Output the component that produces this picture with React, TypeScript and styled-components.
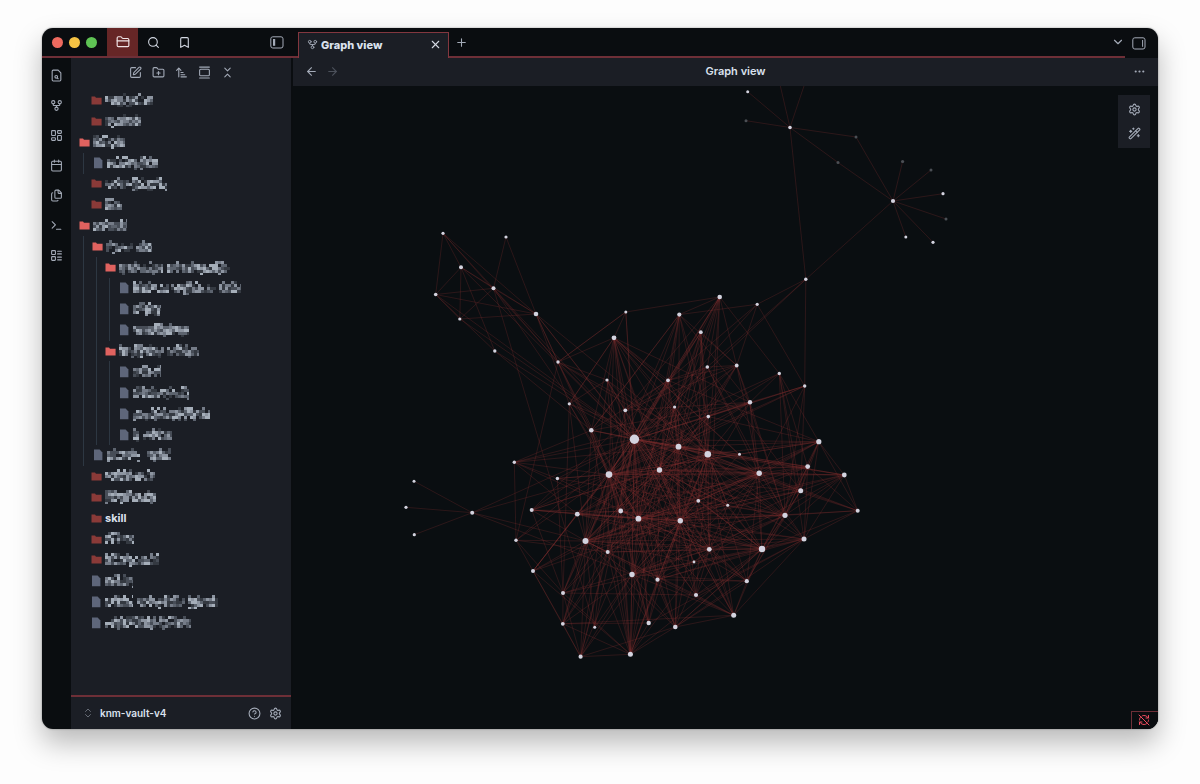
import React from "react";
import styled, { createGlobalStyle } from "styled-components";
import {
  ArrowLeft,
  ArrowRight,
  ArrowUpNarrowWide,
  Bookmark,
  Calendar,
  ChevronDown,
  ChevronsDownUp,
  ChevronsUpDown,
  CircleQuestionMark,
  Ellipsis,
  Files,
  FolderClosed,
  FolderPlus,
  GalleryVertical,
  GitFork,
  LayoutDashboard,
  LayoutList,
  Plus,
  RefreshCwOff,
  Search,
  Settings,
  SquarePen,
  Terminal,
  WandSparkles,
  X,
} from "lucide-react";

const color = {
  base: "#0a0d10",
  canvas: "#0a0e11",
  panel: "#1b1e25",
  accent: "#6e2f37",
  accentFill: "#662626",
  guide: "#2d3742",
  icon: "#a4abb8",
  iconBright: "#d3d8e2",
  iconFaint: "#4c515b",
  text: "#dbe2ee",
  folderOpen: "#e0625f",
  folder: "#8a3a38",
  file: "#5e667a",
};

const GlobalStyle = createGlobalStyle`
  *, *::before, *::after { box-sizing: border-box; }
  body {
    margin: 0;
    background: #fdfdfd;
    font-family: Inter, "Liberation Sans", sans-serif;
    color: ${color.text};
  }
`;

const Page = styled.div`
  display: flex;
  min-height: 100vh;
  padding: 28px 42px 55px;
`;

const Window = styled.div`
  flex: 1;
  min-width: 0;
  display: flex;
  flex-direction: column;
  overflow: hidden;
  border-radius: 11px;
  background: ${color.base};
  box-shadow: 0 0 2px rgba(0, 0, 0, 0.4), 0 14px 28px rgba(0, 0, 0, 0.27);
`;

const TitleBar = styled.header`
  display: flex;
  height: 30px;
`;

const TitleLeft = styled.div`
  display: flex;
  width: 256px;
  padding-right: 14px;
  border-bottom: 2px solid ${color.accent};
`;

const Lights = styled.div`
  display: flex;
  align-items: center;
  gap: 6px;
  padding: 0 10px;
`;

const Light = styled.span<{ $fill: string }>`
  width: 11px;
  height: 11px;
  border-radius: 50%;
  background: ${(p) => p.$fill};
`;

const IconButton = styled.button<{ $tone?: string }>`
  display: flex;
  align-items: center;
  justify-content: center;
  flex-shrink: 0;
  padding: 0;
  border: 0;
  background: none;
  color: ${(p) => p.$tone ?? color.icon};
`;

const PanelButton = styled(IconButton)<{ $active?: boolean }>`
  width: 31px;
  background: ${(p) => (p.$active ? color.accentFill : "none")};
`;

const Spacer = styled.div<{ $lined?: boolean }>`
  flex: 1;
  border-bottom: ${(p) => (p.$lined ? `2px solid ${color.accent}` : "0")};
`;

const Tab = styled.div`
  display: flex;
  align-items: center;
  width: 151px;
  margin-top: 4px;
  padding: 0 6px 2px 8px;
  gap: 3px;
  border: solid #83373f;
  border-width: 1px 1px 0;
  background: ${color.panel};
`;

const TabTitle = styled.span`
  flex: 1;
  font-size: 11px;
  font-weight: 800;
  line-height: 16px;
`;

const NewTab = styled(IconButton)`
  width: 25px;
  border-bottom: 2px solid ${color.accent};
`;

const TitleRight = styled.div`
  display: flex;
  align-items: center;
  width: 33px;
  padding-left: 7px;
`;

const ListTabs = styled(IconButton)`
  width: 14px;
  border-bottom: 2px solid ${color.accent};
`;

const Body = styled.div`
  flex: 1;
  display: flex;
  min-height: 0;
`;

const Ribbon = styled.nav`
  display: flex;
  flex-direction: column;
  align-items: center;
  gap: 17px;
  width: 29px;
  padding-top: 11px;
`;

const Sidebar = styled.aside`
  display: flex;
  flex-direction: column;
  width: 220px;
  background: ${color.panel};
`;

const Toolbar = styled.div`
  display: flex;
  justify-content: center;
  gap: 10px;
  padding: 8px 0 11px 1px;
`;

const Tree = styled.ul`
  display: grid;
  grid-auto-rows: 1fr;
  height: 543px;
  margin: 0 0 auto;
  padding: 0 8px;
  list-style: none;
`;

const TreeRow = styled.li`
  display: flex;
  min-height: 0;
`;

const Guide = styled.span`
  width: 9px;
  margin-left: 4px;
  border-left: 1px solid ${color.guide};
`;

const RowButton = styled.button<{ $indent: number }>`
  display: flex;
  align-items: center;
  gap: 3px;
  padding: 0 0 0 ${(p) => p.$indent}px;
  border: 0;
  background: none;
  color: ${color.text};
  font: 700 11px/16px Inter, "Liberation Sans", sans-serif;
`;

const Footer = styled.footer`
  display: flex;
  align-items: center;
  gap: 8px;
  height: 34px;
  padding: 0 9px 0 11px;
  border-top: 2px solid ${color.accent};
`;

const VaultButton = styled.button`
  display: flex;
  align-items: center;
  flex: 1;
  gap: 6px;
  padding: 0;
  border: 0;
  background: none;
  color: ${color.text};
  font: 600 10px/16px Inter, "Liberation Sans", sans-serif;
`;

const Main = styled.main`
  flex: 1;
  min-width: 0;
  display: flex;
  flex-direction: column;
  margin-left: 2px;
`;

const ViewHeader = styled.div`
  display: grid;
  grid-template-columns: 1fr auto 1fr;
  align-items: center;
  height: 28px;
  padding: 0 12px 2px;
  background: ${color.panel};
`;

const HeaderActions = styled.div<{ $end?: boolean }>`
  display: flex;
  gap: 8px;
  justify-content: ${(p) => (p.$end ? "flex-end" : "flex-start")};
`;

const ViewTitle = styled.h1`
  margin: 0;
  padding-left: 20px;
  font-size: 11px;
  font-weight: 600;
  line-height: 16px;
`;

const GraphArea = styled.section`
  position: relative;
  flex: 1;
  min-height: 0;
  display: flex;
  background: ${color.canvas};
`;

const GraphSvg = styled.svg`
  flex: 1;
  width: 0;
  min-width: 0;
  height: auto;
`;

const GraphControls = styled.div`
  position: absolute;
  top: 9px;
  right: 8px;
  display: flex;
  flex-direction: column;
  width: 32px;
  padding: 2px 0 3px;
  background: ${color.panel};
`;

const ControlButton = styled(IconButton)`
  height: 24px;
`;

const SyncStatus = styled.button`
  position: absolute;
  right: 0;
  bottom: 0;
  display: flex;
  align-items: center;
  padding: 2px 8px 3px 6px;
  border: solid ${color.accent};
  border-width: 1px 0 0 1px;
  background: ${color.base};
  color: #ee4d5f;
`;

/* ---------- icons ---------- */

const PanelIcon = ({ side }: { side: "left" | "right" }) => (
  <svg width="14" height="13" viewBox="0 0 14 13" fill="none" stroke="currentColor" aria-hidden="true">
    <rect x="0.8" y="0.8" width="12.2" height="11.2" rx="2" />
    {side === "left" ? (
      <rect x="3" y="3" width="2.2" height="6.8" fill="currentColor" stroke="none" />
    ) : (
      <path d="M10.6 3v6.8" />
    )}
  </svg>
);

const FileSearchIcon = () => (
  <svg width="13" height="13" viewBox="0 0 24 24" fill="none" stroke="currentColor" strokeWidth="2" strokeLinecap="round" strokeLinejoin="round" aria-hidden="true">
    <path d="M15 2H6a2 2 0 0 0-2 2v16a2 2 0 0 0 2 2h12a2 2 0 0 0 2-2V7z" />
    <circle cx="11.5" cy="14.5" r="2.5" />
    <path d="M13.3 16.3 15 18" />
  </svg>
);

const FolderGlyph = ({ fill }: { fill: string }) => (
  <svg width="11" height="9" viewBox="0 0 11 9" aria-hidden="true">
    <path d="M0.5 0.5H4L5 1.8H10.6V8.4H0.5Z" fill={fill} />
  </svg>
);

const FileGlyph = () => (
  <svg width="11" height="12" viewBox="0 0 11 12" aria-hidden="true">
    <path d="M1 0.6H6.6L9.4 3.4V11.2H1Z" fill={color.file} />
  </svg>
);

/* ---------- redacted names ---------- */

const mosaicShades = ["#343941", "#474d57", "#5c636e", "#757c88", "#8d95a1", "#a5aeb9"];
const rowDensity = [0.3, 0.88, 0.95, 0.82, 0.12];

const random = (seed: number) => {
  let s = seed * 7919 + 17;
  return () => {
    s = (s * 1103515245 + 12345) % 2147483648;
    return s / 2147483648;
  };
};

const Mosaic = ({ words, seed }: { words: [number, number][]; seed: number }) => {
  const next = random(seed);
  const width = words[words.length - 1][1];
  const cells: React.ReactElement[] = [];
  words.forEach(([from, to]) => {
    for (let x = from; x < to; x += 3) {
      rowDensity.forEach((density, row) => {
        const show = next() < density;
        const shade = Math.floor(next() * mosaicShades.length);
        if (show) {
          cells.push(
            <rect key={`${x}-${row}`} x={x} y={row * 3} width={Math.min(3, to - x)} height="3" fill={mosaicShades[shade]} />
          );
        }
      });
    }
  });
  return (
    <svg width={width} height="14" viewBox={`0 0 ${width} 14`} shapeRendering="crispEdges" aria-hidden="true">
      {cells}
    </svg>
  );
};

type Item = {
  kind: "open" | "folder" | "file";
  depth: number;
  name?: string;
  words?: [number, number][];
};

const items: Item[] = [
  { kind: "folder", depth: 0, words: [[0, 48]] },
  { kind: "folder", depth: 0, words: [[0, 36]] },
  { kind: "open", depth: 0, words: [[0, 32]] },
  { kind: "file", depth: 1, words: [[0, 51]] },
  { kind: "folder", depth: 0, words: [[0, 62]] },
  { kind: "folder", depth: 0, words: [[0, 17]] },
  { kind: "open", depth: 0, words: [[0, 34]] },
  { kind: "open", depth: 1, words: [[0, 27], [30, 46]] },
  { kind: "open", depth: 2, words: [[0, 44], [48, 111]] },
  { kind: "file", depth: 3, words: [[0, 36], [38, 83], [86, 108]] },
  { kind: "file", depth: 3, words: [[0, 28]] },
  { kind: "file", depth: 3, words: [[0, 56]] },
  { kind: "open", depth: 2, words: [[0, 45], [48, 80]] },
  { kind: "file", depth: 3, words: [[0, 28]] },
  { kind: "file", depth: 3, words: [[0, 56]] },
  { kind: "file", depth: 3, words: [[0, 77]] },
  { kind: "file", depth: 3, words: [[0, 6], [10, 39]] },
  { kind: "file", depth: 1, words: [[0, 33], [40, 64]] },
  { kind: "folder", depth: 0, words: [[0, 50]] },
  { kind: "folder", depth: 0, words: [[0, 51]] },
  { kind: "folder", depth: 0, name: "skill" },
  { kind: "folder", depth: 0, words: [[0, 29]] },
  { kind: "folder", depth: 0, words: [[0, 54]] },
  { kind: "file", depth: 0, words: [[0, 28]] },
  { kind: "file", depth: 0, words: [[0, 28], [32, 80], [83, 113]] },
  { kind: "file", depth: 0, words: [[0, 86]] },
];

const rowIndent = (item: Item) => {
  if (item.kind === "open") return 0;
  return item.depth === 0 ? 12 : 1;
};

/* ---------- graph ---------- */

type Point = [x: number, y: number, r: number];

const nodes: Record<string, Point> = {
  A: [443, 233.3, 1.6], B: [506, 237, 1.6], C: [461, 267.3, 2], D: [493.5, 288.3, 2], E: [435.7, 294.5, 1.8],
  F: [459.8, 319, 1.6], G: [536, 314, 2.3], H: [494.8, 351, 1.7], I: [558, 362, 1.7], J: [625.8, 312, 1.5],
  K: [614, 337.8, 2.4], L: [607, 380, 1.6], M: [569.3, 403.8, 1.6], N: [625.3, 410.3, 1.9], O: [591.3, 430.3, 2.3],
  P: [634.4, 439.3, 4.7], Q: [679.3, 314.6, 2.1], R: [719.7, 297, 2.3], S: [757.2, 304.3, 1.6], T: [805.8, 279.3, 1.7],
  U: [700.8, 332.2, 1.9], V: [707.3, 367, 1.8], W: [736.7, 365.5, 1.9], X: [779.3, 373.5, 1.7], Y: [804.7, 386, 1.7],
  Z: [668, 380.3, 1.9], a1: [750, 402.3, 2.2], a2: [674.6, 407, 1.6], a3: [708.3, 416.6, 1.8], a4: [678.5, 446.7, 2.9],
  a5: [707.8, 454.2, 3.3], a6: [739.5, 454.3, 1.5], a7: [818.8, 441.7, 2.6], a8: [807.7, 466.6, 2.4], a9: [844.3, 475, 2.4],
  b0: [659.5, 470, 2.7], b1: [609, 474.6, 3.3], b2: [759.2, 473.3, 2.7], b3: [800.7, 490.7, 2.5], b4: [857.7, 510.7, 2],
  b5: [785, 515.3, 2.6], b6: [698.3, 500.8, 1.9], b7: [727.7, 505.3, 1.5], b8: [620.7, 511, 2.4], b9: [638.4, 518.7, 2.9],
  c0: [680.3, 520.7, 2.7], c1: [804, 539, 2.5], c2: [762, 549, 3.2], c3: [709.3, 549.3, 2.4], c4: [694, 562, 1.4],
  c5: [632, 574.5, 2.7], c6: [657.5, 579.7, 2.1], c7: [746.8, 581.2, 2.1], c8: [696, 595, 2.1], c9: [733.7, 615.3, 2.5],
  d0: [648.7, 623, 2.2], d1: [675.3, 627, 2.3], d2: [630.4, 654.3, 2.5], d3: [580.6, 656.7, 2.1], d4: [594.7, 627.3, 1.5],
  d5: [562.8, 623.8, 1.9], d6: [563, 593, 2], d7: [533, 571, 2], d8: [585.5, 541, 3], d9: [607.7, 552, 2],
  e0: [516, 540.3, 1.7], e1: [531.7, 510, 2], e2: [577.3, 514.2, 2.4], e3: [557.4, 478.5, 1.7], e4: [514.3, 462.3, 1.7],
  e5: [472.2, 512.7, 2], e6: [414, 481.2, 1.5], e7: [406, 507.3, 1.6], e8: [414.3, 534.7, 1.6],
  f0: [747.7, 91.7, 1.5], f2: [790, 127.5, 1.8], f5: [893, 201, 2.1], f8: [943, 193.7, 1.6],
  g0: [905.8, 237, 1.5], g1: [933, 242.3, 1.6],
};

const faintNodes: Record<string, Point> = {
  f1: [746, 120.7, 1.5], f3: [856, 137, 1.5], f4: [838, 162.5, 1.5], f6: [902.6, 161.5, 1.6],
  f7: [931, 170, 1.5], f9: [946, 219, 1.5], h0: [778, 76, 1.5], h1: [806, 80, 1.5],
};

const links: Record<string, string> = {
  f2: "f0 f1 h0 h1 f3 f4 T",
  f5: "f3 f4 f6 f7 f8 f9 g0 g1 T",
  A: "E D G C I",
  B: "D G",
  C: "E F D G H P",
  D: "E F G P I d4 O",
  E: "G F P H",
  F: "G P",
  G: "I P b1 b0 a5 M",
  H: "P O",
  I: "K J P O e0 L a5 b9 b2",
  J: "K R P b9 I",
  K: "P a5 a4 b1 b9 b0 c0 b2 Z N O c5 a6 M a1 a3 a2 d8",
  L: "P b0 b9 d2 a4 a5",
  M: "P d6 d8 b9 b1 L K a4",
  N: "P Z W b0 b1 b8 L",
  O: "P a4 b8 d2 d8 e4 b9 Q a5 b1",
  Q: "R S P Z a5 W b1 b9 a3 O a4 b0 a1",
  R: "U P Z V W X a2 a5 c3 b0 a4 N b1",
  S: "T Y W P Z",
  T: "Y V P",
  U: "P Z a5 a3 b0 b6 W c3 b1 a2 a4",
  V: "P W b2 a4 N b3 Z b1 b5",
  W: "P a1 a3 a4 b1 b2 Z b5 b9",
  X: "P b3 a7 b5 a3 c1 a1 a8",
  Y: "P a1 b1 b2 a3 b5 a4 b3",
  Z: "P b1 b0 a7 c0 b9 O e1 a5 a4 d8",
  a1: "P a4 a3 b5 c2 N e4 b1 O a5 b2 c0",
  a2: "b1 a5 b0 c0 b8 b6",
  a3: "P b0 b6 a5 d8 c0 a7 b1 b9",
  a7: "P a4 a5 a8 a9 b5 b3 b2 c1 c2 b4 b1 a6 b9 c0",
  a8: "P a5 b3 b0 b5 b2 a4 e2 b9 b1 c2 c0 c1",
  a9: "P b2 b5 b4 c1 b1 c2 b9 d8 c3 a5 b0 a4 b3",
  b3: "P a4 a5 b5 c2 b4 c7 b9 b1 d8 c0 c5",
  b4: "b5 c1 c2 a8 b2 c0",
  b5: "P a5 a4 c1 c2 b9 c0 c5 c7 d8 b1 b0 e1 c3 a6 c6",
  b6: "d8 c5 c2 b2 b0 d9 a7",
  b7: "c2 b5 a5 b0 c3 c6",
  c1: "c2 c9 c0 b9 d8 c5 c6 d1 c3 b2 a5 c8 d0",
  c2: "P a5 a4 b9 c0 d8 c5 d2 b1 b0 b2 c7 c3 c9 c6 d9 e2 b8 b6 d6 c8 d1",
  c9: "c7 c3 c0 d1 b9 b0 c6 c5 d5 a5 d8 b6 c8",
  c7: "c6 c3 b9 c0 a5 d1 P b1 b2 c5",
  d0: "c5 b9 P b1 c6 c0 d2 b8 d5 d9",
  d1: "c5 P c6 b9 c0 d8 d2 a4 c3 c2 a5 b1",
  d2: "d3 d8 c0 c5 b9 c6 d5 d6 P a5 b1 d9 b8 d7 c3 a4 b0",
  d3: "d5 d8 d9 d6 b1 b9 P d1 c5 d7 c0",
  d4: "d8 b1 P c5",
  d5: "d8 d7 d9 d6 c5 b1 b9",
  d6: "d8 e3 P b9 c3 b1 e1 b0 c8",
  d7: "e0 P b1 d8 e2 c0 b9",
  e0: "e4 d8 P b1 d6 d9",
  e1: "e2 b9 d8 P b1 b0 a5 c0",
  e2: "P b1 b9 a5 d8 c0 b0 c3 b8 d7 a4",
  e3: "P b1 b0 e4 b5 b9",
  e4: "P b1 a4 b8 e2",
  e5: "e6 e7 e8 P b1 d8 c5",
  P: "a2 a4 a5 a6 b0 b1 b2 b4 b6 b7 b8 b9 c0 c1 c3 c4 c5 c6 c8 c9 d5 d8 d9",
  a5: "a4 b0 b1 b2 b6 b9 c0 d8 c3 c5 c6 d9 a2 b8 b7 c8",
  b1: "a4 b0 b2 b8 b9 c0 d8 c3 c5 c6 d9 b6 c8 a6",
  b9: "a4 b0 b2 b6 b8 c0 c3 c5 c6 c8 d8 d9 b7 a2",
  c0: "a4 b0 b2 b8 c3 c5 c6 c8 d8 d9 a6",
  d8: "b0 b2 b8 c3 c5 d9 a4 c6 c8 c4",
  b0: "a4 b2 b8 c3 c5 c6 d9 a2 c4 b7",
  a4: "b2 b8 c3 c5 c6 c8 b6 a6 a2",
  b2: "c3 c5 b8 b6 b7 c8",
  c3: "c5 c4 b8 d9 c8",
};

const allNodes = { ...nodes, ...faintNodes };

const linkLines = Object.entries(links).flatMap(([from, targets]) =>
  targets.split(" ").map((to) => {
    const [x1, y1] = allNodes[from];
    const [x2, y2] = allNodes[to];
    return [x1, y1, x2, y2] as const;
  })
);

const Graph = () => (
  <GraphSvg viewBox="293 86 865 643" preserveAspectRatio="xMidYMid meet" role="img" aria-label="Graph">
    <g stroke="#86302f" strokeOpacity="0.4" strokeWidth="0.7">
      {linkLines.map(([x1, y1, x2, y2], i) => (
        <line key={i} x1={x1} y1={y1} x2={x2} y2={y2} />
      ))}
    </g>
    <g fill="#4b4f55">
      {Object.entries(faintNodes).map(([id, [x, y, r]]) => (
        <circle key={id} cx={x} cy={y} r={r} />
      ))}
    </g>
    <g fill="#d3d3df">
      {Object.entries(nodes).map(([id, [x, y, r]]) => (
        <circle key={id} cx={x} cy={y} r={r} />
      ))}
    </g>
  </GraphSvg>
);

/* ---------- page ---------- */

const ribbonItems = [
  { label: "Quick switcher", icon: <FileSearchIcon /> },
  { label: "Open graph view", icon: <GitFork size={13} /> },
  { label: "Create new canvas", icon: <LayoutDashboard size={13} /> },
  { label: "Daily note", icon: <Calendar size={13} /> },
  { label: "Insert template", icon: <Files size={13} /> },
  { label: "Command palette", icon: <Terminal size={13} /> },
  { label: "Create new base", icon: <LayoutList size={13} /> },
];

const toolbarItems = [
  { label: "New note", icon: <SquarePen size={13} /> },
  { label: "New folder", icon: <FolderPlus size={13} /> },
  { label: "Change sort order", icon: <ArrowUpNarrowWide size={13} /> },
  { label: "Reveal current file", icon: <GalleryVertical size={13} /> },
  { label: "Collapse all", icon: <ChevronsDownUp size={13} /> },
];

export default function App() {
  return (
    <>
      <GlobalStyle />
      <Page>
        <Window>
          <TitleBar>
            <TitleLeft>
              <Lights>
                <Light $fill="#ee6a5f" />
                <Light $fill="#f5c344" />
                <Light $fill="#5fc454" />
              </Lights>
              <PanelButton $active $tone="#f0e4e6" aria-label="Files">
                <FolderClosed size={14} />
              </PanelButton>
              <PanelButton $tone={color.iconBright} aria-label="Search">
                <Search size={13} />
              </PanelButton>
              <PanelButton $tone={color.iconBright} aria-label="Bookmarks">
                <Bookmark size={13} />
              </PanelButton>
              <Spacer />
              <IconButton aria-label="Toggle left sidebar">
                <PanelIcon side="left" />
              </IconButton>
            </TitleLeft>
            <Tab>
              <GitFork size={11} color={color.icon} />
              <TabTitle>Graph view</TabTitle>
              <IconButton $tone={color.iconBright} aria-label="Close tab">
                <X size={13} />
              </IconButton>
            </Tab>
            <NewTab aria-label="New tab">
              <Plus size={13} />
            </NewTab>
            <Spacer $lined />
            <ListTabs aria-label="List tabs">
              <ChevronDown size={14} />
            </ListTabs>
            <TitleRight>
              <IconButton aria-label="Toggle right sidebar">
                <PanelIcon side="right" />
              </IconButton>
            </TitleRight>
          </TitleBar>
          <Body>
            <Ribbon>
              {ribbonItems.map(({ label, icon }) => (
                <IconButton key={label} aria-label={label}>
                  {icon}
                </IconButton>
              ))}
            </Ribbon>
            <Sidebar>
              <Toolbar>
                {toolbarItems.map(({ label, icon }) => (
                  <IconButton key={label} aria-label={label}>
                    {icon}
                  </IconButton>
                ))}
              </Toolbar>
              <Tree>
                {items.map((item, i) => (
                  <TreeRow key={i}>
                    {Array.from({ length: item.depth }, (_, d) => (
                      <Guide key={d} />
                    ))}
                    <RowButton $indent={rowIndent(item)} aria-label={item.name ?? item.kind}>
                      {item.kind === "file" ? (
                        <FileGlyph />
                      ) : (
                        <FolderGlyph fill={item.kind === "open" ? color.folderOpen : color.folder} />
                      )}
                      {item.name ?? <Mosaic words={item.words!} seed={i + 3} />}
                    </RowButton>
                  </TreeRow>
                ))}
              </Tree>
              <Footer>
                <VaultButton>
                  <ChevronsUpDown size={12} color="#666b75" />
                  knm-vault-v4
                </VaultButton>
                <IconButton aria-label="Help">
                  <CircleQuestionMark size={13} />
                </IconButton>
                <IconButton aria-label="Settings">
                  <Settings size={13} />
                </IconButton>
              </Footer>
            </Sidebar>
            <Main>
              <ViewHeader>
                <HeaderActions>
                  <IconButton aria-label="Back">
                    <ArrowLeft size={13} />
                  </IconButton>
                  <IconButton $tone={color.iconFaint} aria-label="Forward">
                    <ArrowRight size={13} />
                  </IconButton>
                </HeaderActions>
                <ViewTitle>Graph view</ViewTitle>
                <HeaderActions $end>
                  <IconButton aria-label="More options">
                    <Ellipsis size={13} />
                  </IconButton>
                </HeaderActions>
              </ViewHeader>
              <GraphArea>
                <Graph />
                <GraphControls>
                  <ControlButton aria-label="Graph settings">
                    <Settings size={13} />
                  </ControlButton>
                  <ControlButton aria-label="Animate">
                    <WandSparkles size={13} />
                  </ControlButton>
                </GraphControls>
                <SyncStatus aria-label="Sync off">
                  <RefreshCwOff size={12} />
                </SyncStatus>
              </GraphArea>
            </Main>
          </Body>
        </Window>
      </Page>
    </>
  );
}
